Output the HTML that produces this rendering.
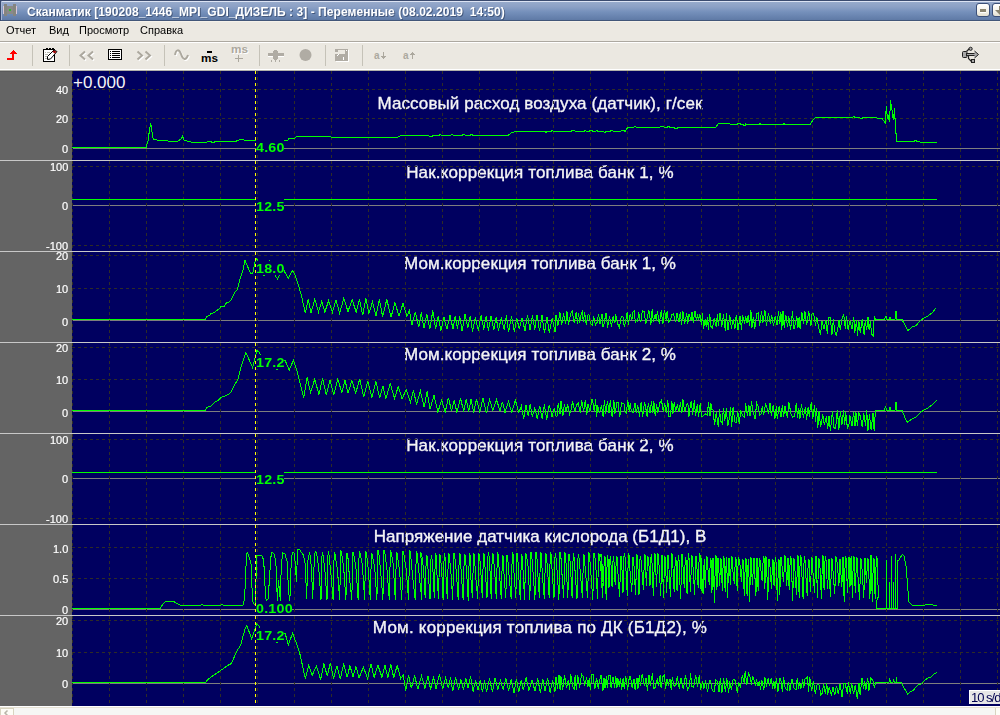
<!DOCTYPE html>
<html><head><meta charset="utf-8">
<style>
*{margin:0;padding:0;box-sizing:border-box}
html,body{width:1000px;height:715px;overflow:hidden;background:#ece9e2;font-family:"Liberation Sans",sans-serif}
.a{position:absolute;white-space:pre;line-height:1}
#title{position:absolute;left:0;top:0;width:1000px;height:21px;background:linear-gradient(#3a4a6e 0,#3a4a6e 1px,#dce3f3 1px,#dce3f3 2px,#97aacb 2px,#8ba0c5 7px,#7590bb 12px,#5f7aa6 20px,#425679 20px,#425679 21px)}
#title .t{will-change:transform;letter-spacing:0.06px;left:27px;top:6px;font-weight:bold;font-size:12px;color:#fff;text-shadow:1px 1px 0 #44587c}
#menu{position:absolute;left:0;top:21px;width:1000px;height:20px;background:#ece9e2;border-top:1px solid #f6f2ea}
#menu .m{top:3px;will-change:transform;font-size:11px;color:#000}
#sep1{position:absolute;left:0;top:41px;width:1000px;height:1px;background:#aca8a0}
#sep2{position:absolute;left:0;top:42px;width:1000px;height:1px;background:#fff}
#tb{position:absolute;left:0;top:43px;width:1000px;height:26px;background:#ebe8e1}
.vs{position:absolute;top:45px;width:1px;height:21px;background:#c5c2b8}
#w69{position:absolute;left:0;top:69px;width:1000px;height:1px;background:#fff}
#l70{position:absolute;left:0;top:70px;width:1000px;height:1px;background:#b0b0aa}
#leftp{position:absolute;left:0;top:71px;width:72px;height:635px;background:#646464;border-top:1px solid #5a5a5a}
.yl{position:absolute;right:932px;will-change:transform;-webkit-text-stroke:0.2px #fff;font-size:11px;color:#fff;line-height:1;white-space:pre}
.pt{will-change:transform;-webkit-text-stroke:0.35px #f4f4f4;position:absolute;left:340px;width:400px;text-align:center;font-size:17px;color:#f4f4f4;line-height:1;white-space:pre}
.vl{position:absolute;left:256px;background:#000060;color:#00ff00;font-weight:bold;font-size:13px;letter-spacing:0.2px;line-height:14px;padding:1px 0 0 0;will-change:transform;white-space:pre}
#bot{position:absolute;left:0;top:706px;width:1000px;height:9px;background:#f6f6f4;border-top:1px solid #fff}
svg{position:absolute;left:0;top:0}
</style></head><body>
<div id="title">
 <div style="position:absolute;left:0;top:0;width:1px;height:21px;background:#3a4a6e"></div><div style="position:absolute;left:1px;top:1px;width:1px;height:19px;background:#a4b4d4"></div>
 <svg width="20" height="20" style="left:0;top:0" shape-rendering="crispEdges"><rect x="3" y="6" width="1" height="8" fill="#d8c8d8"/><rect x="16" y="6" width="1" height="8" fill="#d8c8d8"/><rect x="4" y="4" width="3" height="12" fill="#858580"/><rect x="13" y="4" width="3" height="12" fill="#858580"/><rect x="7" y="6" width="6" height="8" fill="#8a8a88"/><rect x="9" y="9" width="2" height="2" fill="#33bb33"/></svg>
 <div class="a t">Сканматик [190208_1446_MPI_GDI_ДИЗЕЛЬ : 3] - Переменные (08.02.2019  14:50)</div>
 <div style="position:absolute;left:976px;top:3px;width:14px;height:14px;border-radius:3px;background:linear-gradient(#ffffff,#f4f2ea 60%,#e4e0d0);border:1px solid #3b4f78"><div style="position:absolute;left:3px;top:5px;width:6px;height:3px;background:#8a8470;border-bottom:1px solid #fff;box-sizing:content-box"></div></div>
 <div style="position:absolute;left:992px;top:3px;width:14px;height:14px;border-radius:3px;background:linear-gradient(#ffffff,#f4f2ea 60%,#e4e0d0);border:1px solid #3b4f78"><div style="position:absolute;left:6px;top:2px;width:2px;height:7px;background:#8a8470"></div><div style="position:absolute;left:2px;top:6px;width:0;height:0;border-top:5px solid #8a8470;border-left:5px solid transparent"></div></div>
</div>
<div id="menu">
 <div class="a m" style="left:6px">Отчет</div>
 <div class="a m" style="left:49px">Вид</div>
 <div class="a m" style="left:79px">Просмотр</div>
 <div class="a m" style="left:140px">Справка</div>
</div>
<div id="sep1"></div><div id="sep2"></div>
<div id="tb">
<svg width="1000" height="26" style="position:absolute;left:0;top:0" viewBox="0 43 1000 26">
<g shape-rendering="crispEdges">
<!-- red arrow -->
<path d="M13 50 L17 54 L14 54 L14 60 L7 60 L7 58 L12 58 L12 54 L9 54 Z" fill="#ff0000"/>
<!-- notepad -->
<rect x="43" y="49" width="12" height="13" fill="#000"/>
<rect x="44" y="50" width="10" height="11" fill="#fff"/>
<rect x="46" y="48" width="2" height="2" fill="#000"/><rect x="49" y="48" width="2" height="2" fill="#000"/><rect x="52" y="48" width="2" height="2" fill="#000"/>
<rect x="45" y="52" width="1" height="1" fill="#b8b8b0"/><rect x="47" y="52" width="3" height="1" fill="#b8b8b0"/>
<rect x="45" y="54" width="3" height="1" fill="#b8b8b0"/><rect x="45" y="56" width="2" height="1" fill="#b8b8b0"/><rect x="45" y="58" width="2" height="1" fill="#b8b8b0"/>
</g>
<path d="M47.5 59.5 L47.5 56.5 L54 50 L57 51.5 L50.5 59 Z" fill="#fff" stroke="#000" stroke-width="1"/>
<path d="M53.5 50.5 L56.5 51.5 L55 53.5 L52.5 52 Z" fill="#a00000"/>
<!-- << -->
<path d="M85 51.5 L80.5 55.5 L85 59.5 M93 51.5 L88.5 55.5 L93 59.5" fill="none" stroke="#fff" stroke-width="2" transform="translate(1,1)"/>
<path d="M85 51.5 L80.5 55.5 L85 59.5 M93 51.5 L88.5 55.5 L93 59.5" fill="none" stroke="#aca89e" stroke-width="2"/>
<!-- list -->
<g shape-rendering="crispEdges">
<rect x="108" y="49" width="14" height="11" fill="#000"/>
<rect x="109" y="50" width="12" height="9" fill="#fff"/>
<rect x="110" y="51" width="1" height="1" fill="#000"/><rect x="112" y="51" width="8" height="1" fill="#000"/>
<rect x="110" y="53" width="1" height="1" fill="#000"/><rect x="112" y="53" width="8" height="1" fill="#000"/>
<rect x="110" y="55" width="1" height="1" fill="#000"/><rect x="112" y="55" width="8" height="1" fill="#000"/>
<rect x="110" y="57" width="1" height="1" fill="#000"/><rect x="112" y="57" width="8" height="1" fill="#000"/>
</g>
<!-- >> -->
<path d="M137.5 51.5 L142 55.5 L137.5 59.5 M145.5 51.5 L150 55.5 L145.5 59.5" fill="none" stroke="#fff" stroke-width="2" transform="translate(1,1)"/>
<path d="M137.5 51.5 L142 55.5 L137.5 59.5 M145.5 51.5 L150 55.5 L145.5 59.5" fill="none" stroke="#aca89e" stroke-width="2"/>
<!-- sine -->
<path d="M175 55 C176 49, 179 49, 181 54 C183 60, 186 61, 188 55" fill="none" stroke="#fff" stroke-width="2" transform="translate(1,1)"/>
<path d="M175 55 C176 49, 179 49, 181 54 C183 60, 186 61, 188 55" fill="none" stroke="#aca89e" stroke-width="2"/>
<!-- ms bold -->
<rect x="207" y="51" width="5" height="2" fill="#000" shape-rendering="crispEdges"/>
<text x="201" y="62" font-family="Liberation Sans" font-weight="bold" font-size="11" fill="#000" textLength="17" lengthAdjust="spacingAndGlyphs">ms</text>
<!-- ms + gray -->
<text x="232" y="53.5" font-family="Liberation Sans" font-weight="bold" font-size="11" fill="#fff" textLength="17" lengthAdjust="spacingAndGlyphs">ms</text>
<text x="231" y="52.5" font-family="Liberation Sans" font-weight="bold" font-size="11" fill="#aca89e" textLength="17" lengthAdjust="spacingAndGlyphs">ms</text>
<g shape-rendering="crispEdges">
<rect x="235" y="58" width="8" height="1" fill="#aca89e"/><rect x="238" y="55" width="1" height="7" fill="#aca89e"/>
<!-- plug -->
<rect x="268" y="53" width="16" height="3" fill="#b0aca4"/>
<rect x="274" y="50" width="3" height="10" fill="#b0aca4"/><rect x="273" y="51" width="5" height="8" fill="#b0aca4"/>
<rect x="271" y="60" width="1" height="2" fill="#b0aca4"/><rect x="275" y="60" width="1" height="2" fill="#b0aca4"/><rect x="279" y="60" width="1" height="2" fill="#b0aca4"/>
<rect x="268" y="56" width="5" height="1" fill="#fff"/><rect x="278" y="56" width="6" height="1" fill="#fff"/>
</g>
<circle cx="305.5" cy="55" r="6" fill="#b0aca4"/>
<!-- save -->
<g shape-rendering="crispEdges">
<rect x="336" y="50" width="13" height="12" fill="#fff"/>
<rect x="335" y="49" width="13" height="12" fill="#b0aca4"/>
<rect x="338" y="50" width="7" height="4" fill="#ece9e2"/>
<rect x="335" y="52" width="4" height="2" fill="#ece9e2"/>
<rect x="346" y="50" width="1" height="1" fill="#fff"/>
<rect x="343" y="57" width="1" height="3" fill="#fff"/>
<rect x="337" y="55" width="1" height="1" fill="#fff"/><rect x="338" y="54" width="1" height="1" fill="#fff"/>
</g>
<!-- a down / a up -->
<text x="374" y="58.5" font-family="Liberation Sans" font-weight="bold" font-size="10" fill="#aca89e">a</text>
<g shape-rendering="crispEdges">
<rect x="383" y="52" width="1" height="7" fill="#aca89e"/><rect x="381" y="56" width="5" height="1" fill="#aca89e"/><rect x="382" y="57" width="3" height="1" fill="#aca89e"/>
</g>
<text x="403" y="58.5" font-family="Liberation Sans" font-weight="bold" font-size="10" fill="#aca89e">a</text>
<g shape-rendering="crispEdges">
<rect x="412" y="52" width="1" height="7" fill="#aca89e"/><rect x="410" y="54" width="5" height="1" fill="#aca89e"/><rect x="411" y="53" width="3" height="1" fill="#aca89e"/>
</g>
<!-- usb -->
<path d="M966.5 51.5 L969.5 48.5" stroke="#222" stroke-width="1.2" fill="none"/>
<circle cx="970.6" cy="48.8" r="1.6" fill="#a8a8a8" stroke="#222" stroke-width="1"/>
<path d="M968.5 55.5 L968.5 58.5 L971.5 61.5" stroke="#222" stroke-width="1.2" fill="none"/>
<rect x="971.5" y="59.5" width="3" height="3" fill="#a8a8a8" stroke="#222" stroke-width="1"/>
<rect x="962.5" y="51.5" width="4.5" height="6" rx="1" fill="#a8a8a8" stroke="#222" stroke-width="1"/>
<rect x="966.5" y="53.5" width="9" height="2" fill="#a8a8a8" stroke="#222" stroke-width="1"/>
<path d="M974.5 51 L978.5 54.5 L974.5 58" fill="#a8a8a8" stroke="#222" stroke-width="1"/>
</svg>

</div>
<div class="vs" style="left:32px"></div><div class="vs" style="left:69px"></div><div class="vs" style="left:164px"></div><div class="vs" style="left:259px"></div><div class="vs" style="left:325px"></div><div class="vs" style="left:362px"></div>
<div id="w69"></div><div id="l70"></div>
<div id="leftp"></div>
<div style="position:absolute;left:72px;top:71px;width:928px;height:635px;background:#000060"></div>
<div class="pt" style="top:95px;letter-spacing:0.09px">Массовый расход воздуха (датчик), г/сек</div>
<div class="pt" style="top:164px;letter-spacing:0.15px">Нак.коррекция топлива банк 1, %</div>
<div class="pt" style="top:255px;letter-spacing:0.09px">Мом.коррекция топлива банк 1, %</div>
<div class="pt" style="top:346px;letter-spacing:0.09px">Мом.коррекция топлива банк 2, %</div>
<div class="pt" style="top:437px;letter-spacing:0.15px">Нак.коррекция топлива банк 2, %</div>
<div class="pt" style="top:528px;letter-spacing:0.02px">Напряжение датчика кислорода (Б1Д1), В</div>
<div class="pt" style="top:619px;letter-spacing:0.2px">Мом. коррекция топлива по ДК (Б1Д2), %</div>
<div class="a" style="left:73px;top:74px;font-size:17px;color:#f4f4f4">+0.000</div>
<svg width="1000" height="715" shape-rendering="crispEdges">
<path d="M73 148.5H1000 M73 205.5H1000 M73 320.5H1000 M73 411.5H1000 M73 478.5H1000 M73 609.5H1000 M73 683.5H1000" stroke="#7e7e7e" stroke-width="1" fill="none"/>
<path d="M72.5 71V160 M109.5 71V160 M146.5 71V160 M183.5 71V160 M220.5 71V160 M257.5 71V160 M294.5 71V160 M331.5 71V160 M368.5 71V160 M405.5 71V160 M442.5 71V160 M479.5 71V160 M516.5 71V160 M553.5 71V160 M590.5 71V160 M627.5 71V160 M664.5 71V160 M701.5 71V160 M738.5 71V160 M775.5 71V160 M812.5 71V160 M849.5 71V160 M886.5 71V160 M923.5 71V160 M960.5 71V160 M997.5 71V160 M72 89.5H1000 M72 118.5H1000 M72.5 161V251 M109.5 161V251 M146.5 161V251 M183.5 161V251 M220.5 161V251 M257.5 161V251 M294.5 161V251 M331.5 161V251 M368.5 161V251 M405.5 161V251 M442.5 161V251 M479.5 161V251 M516.5 161V251 M553.5 161V251 M590.5 161V251 M627.5 161V251 M664.5 161V251 M701.5 161V251 M738.5 161V251 M775.5 161V251 M812.5 161V251 M849.5 161V251 M886.5 161V251 M923.5 161V251 M960.5 161V251 M997.5 161V251 M72 166.5H1000 M72 245.5H1000 M72.5 252V342 M109.5 252V342 M146.5 252V342 M183.5 252V342 M220.5 252V342 M257.5 252V342 M294.5 252V342 M331.5 252V342 M368.5 252V342 M405.5 252V342 M442.5 252V342 M479.5 252V342 M516.5 252V342 M553.5 252V342 M590.5 252V342 M627.5 252V342 M664.5 252V342 M701.5 252V342 M738.5 252V342 M775.5 252V342 M812.5 252V342 M849.5 252V342 M886.5 252V342 M923.5 252V342 M960.5 252V342 M997.5 252V342 M72 255.5H1000 M72 288.5H1000 M72.5 343V433 M109.5 343V433 M146.5 343V433 M183.5 343V433 M220.5 343V433 M257.5 343V433 M294.5 343V433 M331.5 343V433 M368.5 343V433 M405.5 343V433 M442.5 343V433 M479.5 343V433 M516.5 343V433 M553.5 343V433 M590.5 343V433 M627.5 343V433 M664.5 343V433 M701.5 343V433 M738.5 343V433 M775.5 343V433 M812.5 343V433 M849.5 343V433 M886.5 343V433 M923.5 343V433 M960.5 343V433 M997.5 343V433 M72 347.5H1000 M72 379.5H1000 M72.5 434V524 M109.5 434V524 M146.5 434V524 M183.5 434V524 M220.5 434V524 M257.5 434V524 M294.5 434V524 M331.5 434V524 M368.5 434V524 M405.5 434V524 M442.5 434V524 M479.5 434V524 M516.5 434V524 M553.5 434V524 M590.5 434V524 M627.5 434V524 M664.5 434V524 M701.5 434V524 M738.5 434V524 M775.5 434V524 M812.5 434V524 M849.5 434V524 M886.5 434V524 M923.5 434V524 M960.5 434V524 M997.5 434V524 M72 439.5H1000 M72 518.5H1000 M72.5 525V615 M109.5 525V615 M146.5 525V615 M183.5 525V615 M220.5 525V615 M257.5 525V615 M294.5 525V615 M331.5 525V615 M368.5 525V615 M405.5 525V615 M442.5 525V615 M479.5 525V615 M516.5 525V615 M553.5 525V615 M590.5 525V615 M627.5 525V615 M664.5 525V615 M701.5 525V615 M738.5 525V615 M775.5 525V615 M812.5 525V615 M849.5 525V615 M886.5 525V615 M923.5 525V615 M960.5 525V615 M997.5 525V615 M72 547.5H1000 M72 578.5H1000 M72.5 616V706 M109.5 616V706 M146.5 616V706 M183.5 616V706 M220.5 616V706 M257.5 616V706 M294.5 616V706 M331.5 616V706 M368.5 616V706 M405.5 616V706 M442.5 616V706 M479.5 616V706 M516.5 616V706 M553.5 616V706 M590.5 616V706 M627.5 616V706 M664.5 616V706 M701.5 616V706 M738.5 616V706 M775.5 616V706 M812.5 616V706 M849.5 616V706 M886.5 616V706 M923.5 616V706 M960.5 616V706 M997.5 616V706 M72 620.5H1000 M72 652.5H1000" stroke="#2e2c26" stroke-width="1" stroke-dasharray="3 3" fill="none"/>
<path d="M72.0 147.5 L146.0 147.5 L148.0 141.0 L149.5 130.0 L150.7 123.5 L151.5 128.0 L152.5 136.0 L153.5 139.5 L160.0 140.5 L168.0 141.0 L178.0 141.0 L181.0 139.0 L182.4 136.0 L184.0 140.0 L188.0 141.5 L194.0 142.4 L205.0 142.4 L210.0 141.5 L213.0 142.5 L216.0 141.5 L235.0 141.5 L238.0 140.5 L241.0 139.0 L244.0 140.0 L256.0 140.0" stroke="#00ff00" stroke-width="1" fill="none" stroke-linejoin="miter"/>
<path d="M284.0 140.0 L288.0 140.0 L289.0 138.0 L295.0 138.0 L297.0 136.0 L330.0 136.0 L331.0 137.0 L398.0 137.0 L400.0 136.0 L402.0 135.5 L428.7 135.5 L429.2 136.5 L432.2 136.5 L432.7 135.5 L439.2 135.5 L439.7 134.5 L440.7 134.5 L441.2 135.5 L450.0 135.5 L452.0 134.5 L454.0 135.5 L462.1 135.5 L462.6 134.5 L464.6 134.5 L465.1 135.5 L470.0 135.5 L471.0 134.5 L474.0 135.5 L508.0 135.5 L511.0 133.0 L515.0 131.5 L545.0 131.5 L545.5 132.5 L546.5 132.5 L547.0 131.5 L551.1 131.5 L551.6 130.5 L552.6 130.5 L553.1 131.5 L571.4 131.5 L571.9 130.5 L574.9 130.5 L575.4 131.5 L584.2 131.5 L584.7 130.5 L585.7 130.5 L586.2 131.5 L589.5 131.5 L590.0 130.5 L592.0 130.5 L592.5 131.5 L595.6 131.5 L596.1 130.5 L597.1 130.5 L597.6 131.5 L603.6 131.5 L604.1 132.5 L605.1 132.5 L605.6 131.5 L610.2 131.5 L610.7 130.5 L612.7 130.5 L613.2 131.5 L620.6 131.5 L621.1 130.5 L624.1 130.5 L624.6 131.5 L625.0 131.5 L628.0 127.0 L634.1 127.0 L634.6 126.0 L635.6 126.0 L636.1 127.0 L660.0 127.0 L662.0 126.0 L664.0 127.0 L667.8 127.0 L668.3 126.0 L669.3 126.0 L669.8 127.0 L674.1 127.0 L674.6 128.0 L677.6 128.0 L678.1 127.0 L680.0 127.0 L682.0 128.0 L690.0 127.0 L700.0 127.5 L716.0 127.0 L718.0 124.0 L728.0 123.0 L730.0 124.0 L737.4 124.0 L737.9 123.0 L739.9 123.0 L740.4 124.0 L742.8 124.0 L743.3 125.0 L745.3 125.0 L745.8 124.0 L759.0 124.5 L760.0 123.5 L761.0 124.5 L783.0 124.5 L784.0 123.5 L785.0 124.5 L810.0 124.5 L813.0 120.0 L816.0 117.0 L822.0 118.0 L830.0 117.5 L840.0 118.0 L850.0 117.5 L852.8 117.5 L853.3 116.5 L854.3 116.5 L854.8 117.5 L860.0 118.0 L862.6 118.0 L863.1 117.0 L866.1 117.0 L866.6 118.0 L870.0 117.7 L876.0 117.4 L878.0 119.0 L882.0 118.4 L883.0 119.8 L885.4 123.0 L885.5 115.3 L886.6 106.2 L887.1 115.3 L888.5 120.2 L889.4 111.4 L889.6 122.3 L890.4 100.2 L891.0 111.0 L891.3 104.0 L892.4 113.2 L893.4 120.2 L894.5 108.3 L894.8 118.8 L895.5 118.8 L895.9 133.1 L896.4 133.1 L896.6 141.2 L914.4 141.2 L914.9 140.2 L915.9 140.2 L916.4 141.2 L919.7 141.2 L920.0 142.4 L937.0 142.4" stroke="#00ff00" stroke-width="1" fill="none" stroke-linejoin="miter"/>
<path d="M72.0 199.5 L256.0 199.5" stroke="#00ff00" stroke-width="1" fill="none" stroke-linejoin="miter"/>
<path d="M284.0 199.5 L937.0 199.5" stroke="#00ff00" stroke-width="1" fill="none" stroke-linejoin="miter"/>
<path d="M72.0 472.5 L256.0 472.5" stroke="#00ff00" stroke-width="1" fill="none" stroke-linejoin="miter"/>
<path d="M284.0 472.5 L937.0 472.5" stroke="#00ff00" stroke-width="1" fill="none" stroke-linejoin="miter"/>
<path d="M72.0 319.7 L205.0 319.7 L206.8 316.6 L210.2 314.9 L211.0 313.2 L214.4 312.9 L216.1 310.7 L218.7 309.5 L221.2 306.4 L224.6 306.0 L226.3 303.0 L229.7 301.6 L231.4 299.6 L234.8 292.5 L237.4 289.4 L239.9 279.2 L243.3 269.0 L245.0 260.5 L250.4 273.0 L252.8 273.0 L254.9 262.5 L256.4 258.6 L259.0 262.0 L262.0 272.0 L264.0 276.0 L266.0 268.0 L269.3 260.4 L272.0 266.0 L275.0 275.0 L277.4 279.0 L281.0 272.0 L284.0 270.6 L288.2 278.4 L292.4 270.6 L294.2 273.0 L297.7 282.6 L301.1 294.5 L305.4 313.2 L308.2 298.9 L311.0 313.1 L314.8 298.9 L318.5 311.9 L321.7 301.3 L324.8 312.1 L328.6 300.8 L332.5 312.0 L336.0 299.8 L339.6 313.2 L343.8 298.3 L348.0 311.6 L352.1 299.4 L356.2 312.3 L359.5 299.1 L362.7 315.3 L365.8 298.4 L368.9 313.8 L372.5 301.6 L376.0 315.7 L379.3 299.2 L382.6 316.5 L386.8 299.3 L391.0 317.2 L395.0 302.6 L399.0 316.2 L403.0 303.4 L406.9 316.3 L409.4 310.7 L411.9 324.9 L415.3 312.0 L418.8 327.3 L421.3 312.2 L423.9 328.3 L426.9 314.2 L429.9 329.0 L432.8 310.5 L435.6 328.5 L438.2 315.9 L440.9 331.0 L443.9 317.1 L446.9 329.2 L450.0 315.4 L453.0 329.1 L455.2 315.8 L457.4 328.6 L459.7 316.2 L462.1 331.1 L465.0 314.1 L467.8 328.4 L470.2 316.0 L472.5 331.5 L475.4 317.6 L478.3 330.6 L481.1 315.1 L483.8 329.6 L486.1 316.1 L488.4 330.9 L491.1 315.6 L493.8 330.2 L496.1 317.3 L498.5 330.9 L501.3 317.3 L504.2 329.8 L506.4 315.3 L508.6 332.4 L511.5 315.8 L514.4 332.0 L516.8 317.7 L519.2 329.3 L522.1 318.2 L525.0 330.7 L527.5 314.8 L530.1 330.2 L532.4 315.5 L534.7 329.5 L537.1 314.8 L539.5 331.4 L542.0 315.3 L544.5 333.1 L546.9 316.6 L549.3 333.0 L552.2 318.4 L555.0 331.9 L556.0 314.8 L557.9 325.9 L559.9 312.1 L561.6 325.0 L563.6 313.6 L565.7 323.8 L566.9 311.3 L568.6 324.6 L570.5 314.3 L572.2 311.3 L574.3 323.3 L576.3 311.7 L577.5 323.7 L578.4 312.8 L579.8 322.7 L580.8 315.4 L582.3 311.9 L583.4 322.4 L584.6 312.1 L586.3 324.9 L587.6 315.7 L588.9 313.9 L590.2 322.7 L592.2 325.3 L593.6 316.3 L595.4 325.0 L597.0 322.6 L598.6 313.8 L600.0 323.6 L602.0 313.9 L602.9 326.8 L604.2 323.2 L606.0 312.7 L607.6 327.8 L609.5 315.8 L611.5 326.5 L613.1 316.1 L614.8 323.4 L615.8 314.5 L617.4 323.2 L619.4 327.6 L621.2 316.9 L622.9 316.6 L624.3 326.9 L625.4 322.2 L627.2 312.1 L628.3 324.9 L630.1 314.4 L631.9 319.5 L632.8 312.5 L634.1 310.9 L635.4 321.9 L636.5 320.5 L637.6 321.7 L638.6 312.1 L640.1 320.7 L641.0 321.3 L642.3 310.7 L644.2 311.5 L645.6 323.5 L646.8 320.3 L648.8 309.7 L650.9 324.8 L652.2 309.2 L653.4 322.3 L655.2 313.9 L656.2 320.5 L657.4 311.4 L659.3 323.5 L661.2 310.3 L662.9 323.9 L664.4 309.6 L666.2 320.6 L667.1 311.1 L668.6 321.8 L670.4 320.2 L671.9 314.1 L673.5 313.9 L675.6 322.4 L677.0 313.4 L679.1 322.2 L680.3 312.0 L681.6 324.5 L682.8 310.7 L684.7 324.0 L686.7 313.5 L687.8 324.0 L689.0 313.9 L691.1 320.1 L692.0 312.1 L693.2 323.0 L694.9 310.8 L696.6 321.0 L697.6 314.0 L698.5 319.7 L699.9 314.1 L701.4 325.1 L702.6 312.9 L703.5 329.3 L705.2 318.9 L706.2 326.7 L707.3 317.1 L708.4 329.8 L709.7 314.4 L711.0 326.5 L712.6 328.0 L714.2 318.1 L716.2 327.2 L717.3 314.4 L718.4 325.8 L720.1 312.6 L721.7 326.7 L723.5 314.5 L725.3 330.6 L726.4 313.0 L728.0 330.4 L729.8 315.1 L731.5 328.5 L733.2 318.6 L734.9 329.3 L736.2 314.9 L738.1 330.3 L740.1 315.6 L741.4 329.6 L742.7 315.3 L744.7 324.0 L745.7 315.8 L746.9 323.3 L748.1 315.3 L749.6 325.5 L750.9 310.0 L752.0 327.6 L753.2 316.9 L754.9 328.5 L756.6 313.9 L758.3 313.0 L759.6 325.6 L761.6 310.8 L762.9 323.2 L764.9 310.2 L766.4 326.4 L768.5 312.8 L770.3 323.6 L771.7 315.4 L773.4 325.7 L775.2 316.5 L777.1 325.4 L778.5 310.8 L779.8 324.4 L780.9 312.2 L781.8 329.6 L783.0 310.6 L784.2 327.5 L785.8 314.6 L787.6 327.1 L788.7 316.0 L790.6 329.7 L792.5 311.3 L793.9 329.2 L794.8 326.1 L796.8 315.9 L797.8 328.4 L799.2 316.7 L800.1 329.2 L801.9 311.9 L803.4 323.9 L804.9 311.1 L806.7 324.8 L808.8 310.9 L810.9 326.4 L811.8 314.1 L813.6 313.4 L815.5 325.5 L816.8 317.0 L818.8 328.3 L820.5 335.0 L822.0 321.0 L824.0 328.8 L825.9 320.0 L827.3 334.0 L828.6 317.1 L830.4 317.6 L831.9 335.2 L833.3 319.4 L834.7 331.1 L836.3 335.2 L837.7 329.0 L839.0 320.4 L840.3 330.4 L841.6 320.6 L843.7 314.5 L845.4 329.1 L846.4 316.4 L848.1 329.6 L850.0 320.7 L852.0 329.3 L853.8 316.9 L854.8 333.1 L856.6 319.7 L857.5 335.7 L858.9 321.2 L860.3 332.9 L862.1 319.4 L864.2 335.3 L865.2 320.4 L866.6 330.4 L868.0 317.2 L869.1 330.0 L870.4 321.0 L871.6 334.3 L873.2 335.8 L874.3 315.8 L875.4 319.5 L884.0 319.5 L886.0 316.0 L887.0 319.5 L889.0 319.5 L890.0 317.0 L891.0 319.5 L895.0 319.5 L896.0 311.0 L897.0 319.5 L902.0 319.5 L908.0 330.5 L912.0 327.0 L916.0 325.5 L920.0 321.0 L924.0 318.0 L928.0 316.0 L932.0 313.0 L936.0 308.0" stroke="#00ff00" stroke-width="1" fill="none" stroke-linejoin="miter"/>
<path d="M72.0 410.7 L205.0 410.7 L206.8 407.6 L211.0 405.9 L214.4 402.5 L218.7 400.0 L221.2 397.4 L225.5 395.7 L228.9 394.0 L231.4 391.5 L234.8 384.7 L238.2 378.7 L241.6 365.1 L245.9 352.4 L252.7 367.7 L256.9 350.7 L259.0 352.0 L262.0 358.0 L264.0 366.0 L266.0 362.0 L269.0 356.0 L272.0 360.0 L275.0 368.0 L277.0 370.0 L281.0 363.0 L285.0 360.0 L289.2 370.2 L293.5 360.0 L297.7 373.6 L303.7 397.4 L307.1 377.5 L310.6 392.3 L314.8 379.1 L318.9 394.6 L322.6 378.5 L326.3 394.9 L330.0 380.2 L333.7 394.8 L337.8 379.0 L341.9 392.9 L345.0 380.3 L348.1 393.1 L351.9 380.3 L355.7 393.3 L359.7 379.0 L363.8 397.3 L367.8 380.9 L371.9 397.6 L375.9 381.6 L379.8 398.2 L382.9 385.8 L385.9 398.8 L390.2 383.3 L394.5 398.2 L398.3 386.7 L402.1 398.9 L406.2 389.3 L410.4 402.2 L413.5 390.3 L416.5 404.6 L420.4 391.2 L424.2 407.2 L427.1 391.4 L430.0 409.3 L434.0 395.2 L437.9 412.1 L441.6 400.0 L445.2 412.1 L448.4 397.7 L451.5 410.8 L454.2 400.6 L456.9 412.4 L460.4 398.1 L463.8 411.5 L466.3 398.7 L468.7 411.9 L471.1 398.7 L473.6 412.5 L476.6 398.9 L479.7 412.4 L483.0 398.1 L486.4 413.3 L489.6 399.5 L492.9 410.8 L496.4 399.6 L500.0 410.7 L502.5 401.7 L505.0 412.8 L508.4 401.3 L511.8 412.6 L515.3 400.0 L518.9 412.7 L521.3 405.8 L523.7 419.2 L525.9 404.7 L528.1 415.9 L530.2 403.9 L532.3 416.6 L534.8 408.0 L537.3 418.8 L539.7 405.7 L542.1 418.9 L544.4 404.5 L546.7 419.7 L549.3 404.8 L552.0 416.7 L554.1 408.3 L556.2 416.9 L557.2 415.5 L558.2 403.3 L560.1 414.3 L561.0 401.4 L562.9 415.9 L564.3 404.5 L566.2 411.6 L567.7 404.0 L569.4 414.7 L570.7 411.4 L572.7 400.9 L574.7 411.7 L576.6 405.0 L578.3 403.0 L580.2 413.2 L581.7 400.1 L583.6 411.3 L585.3 400.2 L586.9 414.6 L587.9 404.0 L590.0 411.3 L592.0 399.5 L593.1 403.3 L594.2 411.7 L595.7 399.2 L596.6 417.3 L597.7 405.4 L599.6 413.2 L601.4 405.1 L603.1 416.6 L604.5 399.6 L605.7 413.6 L607.4 400.7 L609.0 413.1 L610.3 400.2 L612.2 417.3 L613.9 400.4 L615.0 413.5 L617.1 402.0 L618.1 402.5 L619.7 416.9 L621.6 402.7 L622.9 403.9 L623.9 403.5 L625.0 412.3 L626.4 413.5 L627.7 399.9 L629.3 412.3 L630.2 403.5 L631.5 411.5 L633.2 412.5 L635.0 403.1 L636.2 413.0 L637.7 404.9 L639.5 416.5 L641.1 402.4 L642.7 417.1 L644.4 402.9 L645.3 404.7 L647.1 416.8 L648.3 403.0 L650.0 412.7 L651.5 400.9 L652.8 412.8 L653.9 401.3 L655.2 415.5 L656.7 404.2 L657.8 413.4 L659.9 402.8 L661.5 400.2 L663.4 412.4 L664.6 402.8 L666.3 412.7 L667.8 400.2 L669.0 416.5 L670.5 416.4 L671.8 400.7 L672.9 413.6 L674.2 402.0 L675.7 411.7 L677.4 404.3 L678.7 412.4 L680.4 402.5 L681.9 413.3 L682.9 399.3 L684.8 412.2 L686.5 404.5 L687.9 403.1 L688.9 417.0 L690.5 404.0 L691.5 401.0 L692.5 415.4 L694.3 400.5 L695.6 416.1 L697.2 404.2 L698.6 416.5 L700.3 402.8 L701.5 416.4 L702.9 416.3 L704.0 414.8 L705.8 413.9 L707.3 415.1 L708.5 402.3 L710.0 416.1 L710.9 403.0 L711.9 409.7 L712.9 409.3 L714.6 424.9 L716.2 412.1 L718.3 426.6 L719.6 409.2 L720.5 420.6 L722.2 423.2 L723.4 408.2 L724.7 420.9 L726.4 408.0 L727.6 425.9 L728.8 422.5 L730.4 406.8 L731.7 426.7 L733.1 407.3 L734.8 421.9 L736.5 422.3 L737.7 410.7 L739.3 424.1 L740.7 410.0 L742.6 415.2 L744.6 417.6 L745.7 403.3 L747.4 416.0 L748.9 404.7 L750.1 416.3 L751.4 401.2 L753.4 413.2 L755.2 419.1 L756.6 402.8 L758.3 406.3 L759.5 415.7 L761.0 414.0 L762.4 405.7 L763.5 415.3 L765.6 404.1 L766.9 407.2 L768.5 414.0 L770.0 403.1 L771.3 416.0 L773.1 405.1 L774.9 419.3 L776.3 405.9 L777.2 418.8 L779.2 406.1 L781.1 417.3 L782.4 404.9 L783.6 417.0 L785.0 405.6 L786.2 413.8 L787.5 416.4 L788.8 401.8 L790.9 413.4 L792.5 417.0 L794.5 416.4 L796.4 402.6 L797.4 418.3 L798.8 408.0 L800.0 418.6 L801.4 403.9 L803.4 417.5 L805.3 407.3 L806.6 419.5 L808.1 407.0 L809.4 417.2 L810.4 405.8 L811.3 403.8 L812.8 418.7 L814.6 405.2 L815.6 421.6 L816.5 407.8 L817.8 427.9 L818.9 410.6 L820.7 427.4 L822.7 414.1 L824.4 425.3 L826.3 416.5 L827.7 429.0 L829.0 416.3 L830.4 431.1 L832.4 410.7 L834.0 427.6 L835.6 428.6 L837.3 409.7 L838.9 429.5 L840.4 411.4 L841.9 425.4 L843.5 410.4 L844.7 424.9 L845.7 412.1 L847.4 428.2 L848.9 424.8 L849.9 415.2 L852.0 426.0 L853.6 411.9 L855.0 425.8 L855.9 412.3 L857.5 425.7 L858.7 411.9 L860.2 416.0 L862.3 427.3 L863.7 412.9 L865.6 426.3 L866.7 410.2 L868.0 430.6 L869.4 414.3 L871.2 430.3 L873.0 412.7 L874.1 430.6 L875.4 410.6 L884.0 410.6 L885.5 407.0 L887.0 410.6 L889.0 410.6 L890.0 407.0 L891.0 410.6 L895.0 410.6 L896.0 402.0 L897.0 410.6 L902.0 410.6 L907.0 422.3 L912.0 419.0 L916.0 417.0 L920.0 413.0 L924.0 410.0 L928.0 408.0 L932.0 405.0 L936.6 400.2" stroke="#00ff00" stroke-width="1" fill="none" stroke-linejoin="miter"/>
<path d="M72.0 682.3 L205.9 682.3 L207.6 679.8 L214.4 674.7 L219.5 671.3 L228.0 665.3 L231.4 663.6 L236.5 651.7 L240.8 644.9 L245.0 628.8 L246.7 625.4 L251.8 639.0 L256.9 623.7 L259.0 626.0 L262.0 632.0 L264.0 640.0 L266.0 636.0 L269.0 630.0 L272.0 634.0 L275.0 641.0 L277.0 643.0 L281.0 636.0 L285.0 633.0 L288.4 644.9 L292.6 633.0 L299.4 651.7 L305.4 678.9 L308.7 665.0 L312.1 675.6 L316.4 665.9 L320.7 679.7 L323.9 663.5 L327.2 676.0 L330.4 662.9 L333.5 678.6 L336.9 666.1 L340.3 678.9 L343.7 663.6 L347.1 677.3 L350.0 665.6 L352.9 676.8 L356.0 666.6 L359.1 677.8 L363.4 667.0 L367.6 678.8 L370.9 663.8 L374.1 677.2 L378.0 665.3 L382.0 677.5 L384.9 664.7 L387.8 677.9 L390.8 664.4 L393.7 677.6 L397.2 665.4 L400.7 678.8 L403.2 675.0 L405.7 690.6 L408.5 674.9 L411.3 688.3 L414.6 675.6 L417.9 689.3 L421.5 675.8 L425.0 688.5 L427.9 675.7 L430.7 690.0 L433.4 676.6 L436.1 689.2 L439.4 673.8 L442.7 688.8 L445.6 677.7 L448.4 688.2 L450.6 676.9 L452.7 691.3 L455.6 677.2 L458.6 689.8 L461.0 679.6 L463.5 689.9 L465.8 678.0 L468.1 688.3 L470.6 676.6 L473.1 691.7 L475.6 679.9 L478.0 690.2 L480.3 680.2 L482.5 692.1 L484.5 680.2 L486.5 692.2 L489.5 678.6 L492.4 691.8 L495.1 677.8 L497.8 689.1 L500.5 680.4 L503.2 689.6 L505.9 678.6 L508.6 690.9 L511.3 679.2 L514.0 692.6 L516.4 678.7 L518.8 692.1 L521.1 680.6 L523.3 689.9 L526.1 677.5 L529.0 690.5 L532.0 679.8 L535.0 691.2 L537.7 678.5 L540.4 693.0 L542.7 678.8 L545.0 690.7 L547.6 678.1 L550.1 692.6 L552.6 680.4 L555.0 691.4 L556.0 677.0 L557.5 688.5 L559.0 675.2 L560.1 689.7 L561.0 676.5 L562.6 690.1 L564.6 675.1 L566.5 687.8 L568.4 679.6 L569.6 689.8 L570.8 674.2 L572.6 686.0 L574.2 689.7 L575.2 674.6 L576.3 689.6 L577.8 675.3 L579.7 687.5 L581.6 674.2 L583.3 676.3 L584.7 685.8 L586.7 677.1 L587.9 686.5 L589.3 678.3 L590.3 690.4 L591.9 674.3 L593.0 674.4 L594.8 689.2 L596.6 677.8 L598.2 688.5 L599.9 679.7 L601.1 675.1 L602.9 690.9 L604.0 678.2 L605.0 688.4 L606.3 676.5 L607.3 687.8 L608.4 675.8 L610.1 675.8 L611.1 687.9 L612.9 676.7 L614.6 688.1 L615.9 676.1 L616.8 688.4 L617.9 678.5 L619.4 686.9 L620.3 678.2 L621.7 690.1 L623.1 678.0 L624.2 688.9 L625.8 675.9 L627.6 689.6 L629.4 676.7 L630.6 676.5 L632.1 687.8 L634.0 678.9 L635.1 690.0 L637.0 678.2 L637.9 688.6 L639.3 674.7 L640.4 686.4 L642.2 674.1 L643.3 679.2 L644.5 686.4 L645.9 677.6 L647.4 690.5 L649.0 675.3 L650.3 685.6 L652.4 673.4 L653.8 688.2 L655.2 687.8 L657.3 678.4 L658.3 686.4 L660.1 675.1 L661.1 688.4 L662.7 676.8 L664.5 675.1 L665.5 689.1 L667.0 678.6 L668.4 684.5 L670.0 679.1 L671.3 690.4 L672.2 677.0 L674.3 686.9 L676.1 684.5 L677.3 676.2 L679.3 688.8 L680.9 677.6 L682.5 686.8 L683.5 688.0 L685.6 674.8 L687.4 690.0 L689.4 686.4 L690.6 673.2 L691.7 686.1 L693.7 687.3 L695.7 675.4 L697.5 687.1 L699.3 675.1 L700.6 689.8 L702.6 681.1 L703.9 688.7 L705.6 680.6 L707.5 692.0 L709.5 680.6 L710.5 680.3 L712.3 690.9 L714.4 691.6 L715.6 679.7 L717.4 681.3 L719.1 692.1 L720.3 678.1 L721.9 693.0 L723.6 678.4 L725.4 691.7 L726.8 678.1 L728.7 692.8 L729.7 681.2 L731.4 690.4 L732.9 680.0 L734.7 679.5 L735.7 682.6 L737.2 692.6 L738.8 682.4 L740.5 687.9 L742.2 675.2 L744.1 682.5 L745.2 670.8 L746.9 684.9 L748.4 672.8 L749.7 675.5 L751.5 684.6 L752.5 676.0 L754.5 681.4 L755.5 685.9 L756.4 679.3 L757.8 686.4 L759.4 680.6 L760.4 689.5 L761.9 680.3 L763.8 689.7 L765.0 677.5 L766.5 686.9 L768.2 677.7 L769.4 685.6 L771.4 677.8 L772.5 689.3 L773.9 680.8 L774.9 688.5 L776.6 677.9 L777.8 692.4 L779.7 678.5 L780.6 678.1 L782.4 691.6 L783.6 677.5 L785.2 688.3 L787.1 690.1 L788.4 682.0 L790.0 690.5 L791.9 678.6 L794.0 688.3 L796.1 689.6 L797.3 677.6 L798.5 688.8 L799.7 682.0 L800.8 689.3 L802.7 679.1 L803.7 687.9 L805.1 678.3 L806.0 678.7 L807.4 677.2 L808.6 691.5 L809.7 677.2 L811.6 691.4 L813.4 681.1 L815.3 693.5 L817.2 684.3 L819.2 685.3 L820.9 695.5 L822.2 693.3 L823.7 684.3 L825.3 694.2 L826.8 683.2 L827.7 694.5 L829.3 686.8 L831.4 696.0 L832.8 686.7 L834.8 694.8 L836.4 685.7 L838.4 694.4 L840.0 683.8 L842.1 697.0 L843.6 684.0 L845.3 683.9 L847.3 693.8 L848.3 682.3 L850.3 694.1 L851.7 682.8 L853.5 694.3 L855.3 685.0 L857.2 698.8 L859.0 683.3 L860.1 694.9 L862.0 678.2 L863.7 689.2 L864.6 680.9 L865.9 689.7 L867.7 677.6 L868.9 691.1 L870.9 677.5 L873.0 681.2 L874.6 688.0 L875.4 682.4 L889.0 682.4 L889.5 679.0 L891.0 682.4 L893.0 682.4 L893.5 679.0 L894.5 682.4 L896.0 682.4 L896.5 677.0 L897.0 682.4 L901.0 682.4 L907.5 694.0 L911.0 691.5 L913.0 690.5 L918.0 685.0 L921.0 684.0 L924.0 681.0 L928.0 678.0 L931.0 677.0 L934.0 674.0 L937.0 672.5" stroke="#00ff00" stroke-width="1" fill="none" stroke-linejoin="miter"/>
<path d="M72.0 608.5 L160.0 608.5 L163.0 604.0 L166.0 601.0 L173.0 601.0 L176.0 603.0 L181.0 605.5 L200.0 605.5 L202.0 604.5 L204.0 605.5 L220.0 605.5 L222.0 604.5 L224.0 605.5 L243.0 605.5 L244.6 598.0 L245.6 575.8 L246.6 553.1 L247.6 552.6 L250.1 560.2 L251.1 564.2 L252.1 590.4 L253.1 603.5 L255.2 604.5 L255.7 589.4 L256.7 555.1 L261.7 555.1 L263.7 560.2 L264.7 580.3 L265.7 598.4 L266.7 600.5 L268.2 598.4 L269.8 573.2 L271.3 552.6 L273.8 553.1 L275.3 558.6 L276.3 569.2 L277.3 600.5 L278.5 580.0 L280.3 600.5 L281.3 564.2 L282.9 553.1 L284.9 554.1 L287.4 562.2 L288.4 590.4 L289.9 600.5 L290.4 583.3 L291.4 558.1 L292.4 552.6 L294.4 553.1 L295.5 567.2 L296.5 582.3 L297.5 549.6 L299.5 549.6 L303.5 555.1 L305.5 565.2 L306.5 599.4 L308.0 560.2 L309.6 551.6 L311.6 569.2 L312.6 599.4 L314.6 554.1 L315.9 551.7 L316.6 553.2 L318.8 569.0 L321.0 599.5 L322.1 552.1 L322.8 553.6 L324.9 569.9 L327.0 599.5 L328.1 551.0 L328.8 552.5 L330.9 573.8 L333.1 599.5 L334.2 552.1 L334.9 553.6 L337.4 569.5 L339.7 599.5 L340.8 550.4 L341.5 551.9 L343.7 567.8 L345.9 599.5 L347.0 552.9 L347.7 554.4 L349.7 580.5 L351.8 599.5 L352.9 552.3 L353.6 553.8 L355.9 567.0 L358.1 599.5 L359.2 550.8 L359.9 552.3 L362.4 565.2 L364.6 599.5 L365.7 551.1 L366.4 552.6 L368.3 569.7 L370.3 599.5 L371.4 553.0 L372.1 554.5 L374.6 566.4 L376.9 599.5 L378.0 550.2 L378.7 551.7 L380.8 573.2 L382.9 599.5 L384.0 550.1 L384.7 551.6 L387.0 569.8 L389.3 599.5 L390.4 550.4 L391.1 551.9 L393.2 564.4 L395.3 599.5 L396.4 551.9 L397.1 553.4 L399.5 570.6 L401.8 599.5 L402.9 551.1 L403.6 552.6 L406.2 569.5 L408.5 599.5 L409.6 550.5 L410.3 552.0 L412.9 578.8 L415.2 599.5 L416.3 551.4 L417.0 552.9 L419.5 578.1 L421.9 599.5 L420.9 552.5 L421.6 554.0 L423.4 567.5 L425.2 597.6 L426.3 554.7 L427.0 556.2 L428.4 573.8 L430.0 599.4 L431.1 554.9 L431.8 556.4 L432.8 568.1 L434.3 597.5 L435.4 553.4 L436.1 554.9 L437.1 577.2 L438.5 598.9 L439.6 553.8 L440.3 555.3 L441.6 568.8 L443.1 600.0 L444.2 553.6 L444.9 555.1 L445.9 574.7 L447.3 598.8 L448.4 552.9 L449.1 554.4 L450.9 572.1 L452.7 599.5 L453.8 552.9 L454.5 554.4 L456.3 571.6 L458.2 599.6 L459.3 552.8 L460.0 554.3 L461.5 576.7 L463.2 600.0 L464.3 553.7 L465.0 555.2 L466.5 569.5 L468.2 600.5 L469.3 553.1 L470.0 554.6 L471.0 579.7 L472.4 597.8 L473.5 553.1 L474.2 554.6 L475.9 578.9 L477.7 598.8 L478.8 553.2 L479.5 554.7 L480.7 569.9 L482.3 598.4 L483.4 553.1 L484.1 554.6 L485.4 572.5 L487.0 598.0 L488.1 552.0 L488.8 553.5 L489.8 565.6 L491.2 598.6 L492.3 552.7 L493.0 554.2 L494.6 569.8 L496.3 598.9 L497.4 552.4 L498.1 553.9 L499.6 574.9 L501.3 599.3 L502.4 555.0 L503.1 556.5 L504.3 580.0 L505.8 597.5 L506.9 554.8 L507.6 556.3 L509.3 578.7 L511.2 598.8 L512.3 552.2 L513.0 553.7 L514.3 578.2 L515.8 597.7 L516.9 553.1 L517.6 554.6 L518.8 576.4 L520.3 599.8 L521.4 554.4 L522.1 555.9 L523.2 572.4 L524.6 600.4 L525.7 553.5 L526.4 555.0 L528.0 565.6 L529.8 600.1 L530.9 552.2 L531.6 553.7 L533.2 574.1 L534.9 599.7 L536.0 552.1 L536.7 553.6 L537.9 575.3 L539.4 598.1 L540.5 552.3 L541.2 553.8 L542.7 579.8 L544.4 599.0 L545.5 552.8 L546.2 554.3 L547.6 569.5 L549.2 597.7 L550.3 552.5 L551.0 554.0 L552.4 574.7 L554.0 597.9 L555.1 553.5 L555.8 555.0 L557.2 572.4 L558.9 599.5 L560.0 552.1 L560.7 553.6 L562.1 575.9 L563.7 598.4 L564.8 552.4 L565.5 553.9 L566.4 569.5 L567.8 598.4 L568.9 554.1 L569.6 555.6 L570.7 570.3 L572.1 597.6 L573.2 553.6 L573.9 555.1 L575.3 574.4 L577.0 598.8 L578.1 554.6 L578.8 556.1 L580.6 575.8 L582.4 597.8 L583.5 554.3 L584.2 555.8 L585.8 575.8 L587.6 598.3 L588.7 552.2 L589.4 553.7 L591.0 575.0 L592.8 600.0 L593.9 552.7 L594.6 554.2 L595.9 567.4 L597.5 598.6 L598.6 553.0 L599.3 554.5 L600.9 569.1 L602.6 597.8 L600.9 554.2 L601.6 555.7 L602.2 567.7 L603.3 586.4 L604.4 556.0 L605.1 557.5 L605.3 570.1 L606.2 599.8 L607.3 555.5 L608.0 557.0 L608.1 570.4 L609.0 587.5 L610.1 556.4 L610.8 557.9 L611.1 567.6 L612.1 587.1 L613.2 555.7 L613.9 557.2 L614.3 572.6 L615.3 585.4 L616.4 555.9 L617.1 557.4 L618.1 575.1 L619.6 597.4 L620.7 555.6 L621.4 557.1 L621.9 567.7 L623.0 593.2 L624.1 553.1 L624.8 554.6 L625.9 568.6 L627.3 595.5 L628.4 553.5 L629.1 555.0 L630.3 575.7 L631.8 591.8 L632.9 556.7 L633.6 558.2 L634.3 572.0 L635.6 594.7 L636.7 554.5 L637.4 556.0 L637.9 565.8 L639.0 595.4 L640.1 555.9 L640.8 557.4 L641.9 570.9 L643.4 590.1 L644.5 553.9 L645.2 555.4 L645.5 570.9 L646.5 585.5 L647.6 556.0 L648.3 557.5 L648.9 563.8 L650.0 585.7 L651.1 554.6 L651.8 556.1 L652.3 572.6 L653.4 595.5 L654.5 553.5 L655.2 555.0 L655.6 566.9 L656.6 587.1 L657.7 553.5 L658.4 555.0 L659.4 571.5 L660.7 596.1 L661.8 554.7 L662.5 556.2 L662.7 571.6 L663.5 598.1 L664.6 556.1 L665.3 557.6 L665.7 568.5 L666.7 592.9 L667.8 554.9 L668.5 556.4 L669.3 577.1 L670.5 597.4 L671.6 553.1 L672.3 554.6 L673.0 568.3 L674.2 592.3 L675.3 556.9 L676.0 558.4 L676.2 577.3 L677.1 591.1 L678.2 554.7 L678.9 556.2 L679.5 575.8 L680.7 598.5 L681.8 553.7 L682.5 555.2 L683.1 569.2 L684.2 587.6 L685.3 556.9 L686.0 558.4 L686.2 578.4 L687.1 594.3 L688.2 553.2 L688.9 554.7 L689.4 568.5 L690.5 592.2 L691.6 555.0 L692.3 556.5 L693.3 570.8 L694.6 595.1 L695.7 555.9 L696.4 557.4 L697.0 568.5 L698.2 588.2 L699.3 553.1 L700.0 554.6 L700.2 565.8 L701.1 591.4 L700.9 557.5 L701.6 559.0 L702.0 578.5 L703.1 594.1 L704.2 559.0 L704.9 560.5 L704.7 574.1 L705.4 587.5 L706.5 555.8 L707.2 557.3 L708.0 569.8 L709.3 585.0 L710.4 558.4 L711.1 559.9 L711.1 576.0 L711.9 593.3 L713.0 557.7 L713.7 559.2 L713.6 570.0 L714.4 602.9 L715.5 555.2 L716.2 556.7 L716.1 566.6 L716.9 590.0 L718.0 558.3 L718.7 559.8 L718.8 569.1 L719.6 586.1 L720.7 558.0 L721.4 559.5 L721.5 570.3 L722.3 590.9 L723.4 556.5 L724.1 558.0 L724.3 567.7 L725.2 592.3 L726.3 556.9 L727.0 558.4 L726.9 568.0 L727.6 598.3 L728.7 557.7 L729.4 559.2 L729.5 564.7 L730.4 584.8 L731.5 556.2 L732.2 557.7 L733.0 571.9 L734.3 584.1 L735.4 557.6 L736.1 559.1 L736.3 568.5 L737.2 590.5 L738.3 557.6 L739.0 559.1 L740.0 565.0 L741.4 582.1 L742.5 558.7 L743.2 560.2 L743.4 573.0 L744.3 596.4 L745.4 558.3 L746.1 559.8 L746.2 569.5 L747.1 596.4 L748.2 558.7 L748.9 560.2 L748.9 572.0 L749.6 601.8 L750.7 557.2 L751.4 558.7 L751.7 573.4 L752.6 584.7 L753.7 557.7 L754.4 559.2 L754.8 574.2 L755.9 596.0 L757.0 558.0 L757.7 559.5 L757.5 574.1 L758.2 591.2 L759.3 558.3 L760.0 559.8 L760.9 570.0 L762.2 581.4 L763.3 556.3 L764.0 557.8 L764.0 566.0 L764.8 589.3 L765.9 556.5 L766.6 558.0 L766.9 573.8 L767.8 600.0 L768.9 558.7 L769.6 560.2 L770.3 572.6 L771.5 588.5 L772.6 558.9 L773.3 560.4 L773.3 572.3 L774.1 586.1 L775.2 557.3 L775.9 558.8 L776.4 572.8 L777.4 601.2 L778.5 559.0 L779.2 560.5 L779.1 576.2 L779.8 595.0 L780.9 556.9 L781.6 558.4 L782.3 571.5 L783.6 581.5 L784.7 555.2 L785.4 556.7 L785.8 568.3 L786.8 585.8 L787.9 557.9 L788.6 559.4 L788.5 576.7 L789.2 589.7 L790.3 556.6 L791.0 558.1 L791.6 570.1 L792.7 600.5 L793.8 558.3 L794.5 559.8 L795.2 574.9 L796.5 595.3 L797.6 555.0 L798.3 556.5 L798.3 568.0 L799.2 598.0 L800.3 555.3 L801.0 556.8 L801.8 572.5 L803.1 598.5 L804.2 556.1 L804.9 557.6 L805.9 576.7 L807.2 596.1 L808.3 558.7 L809.0 560.2 L809.4 570.1 L810.5 591.7 L811.6 557.4 L812.3 558.9 L813.2 576.6 L814.6 593.0 L815.7 555.8 L816.4 557.3 L816.6 570.3 L817.5 598.4 L818.6 558.3 L819.3 559.8 L820.1 569.0 L821.4 599.2 L822.5 555.0 L823.2 556.5 L823.3 567.8 L824.1 590.0 L825.2 555.7 L825.9 557.2 L826.5 572.6 L827.7 588.6 L828.8 558.9 L829.5 560.4 L829.6 581.6 L830.5 596.8 L831.6 558.6 L832.3 560.1 L833.4 577.3 L834.8 593.7 L835.9 556.4 L836.6 557.9 L837.6 567.5 L838.9 586.2 L840.0 558.6 L840.7 560.1 L840.9 573.3 L841.8 587.3 L842.9 556.7 L843.6 558.2 L843.5 576.2 L844.2 602.2 L845.3 556.6 L846.0 558.1 L846.5 571.3 L847.6 592.8 L848.7 556.6 L849.4 558.1 L849.3 569.6 L850.0 586.8 L851.1 555.8 L851.8 557.3 L851.6 566.8 L852.3 598.4 L853.4 556.0 L854.1 557.5 L854.4 575.0 L855.4 593.3 L856.5 557.2 L857.2 558.7 L858.2 581.3 L859.6 599.8 L860.7 558.1 L861.4 559.6 L862.4 575.4 L863.8 597.9 L864.9 557.6 L865.6 559.1 L865.7 570.2 L866.5 583.1 L867.6 557.8 L868.3 559.3 L868.8 574.5 L869.9 599.3 L871.0 555.3 L871.7 556.8 L871.6 573.9 L872.3 601.7 L873.4 558.2 L874.1 559.7 L874.3 575.4 L875.2 599.0 L876.3 556.3 L877.0 557.8 L877.4 571.3 L878.5 596.1 L876.0 603.0 L876.0 608.3 L886.0 608.3 L886.0 560.0 L886.0 608.3 L889.0 608.3 L889.0 582.0 L889.0 608.3 L891.0 608.3 L891.0 556.0 L891.0 608.3 L893.0 608.3 L893.0 582.0 L893.0 608.3 L895.0 608.3 L895.0 554.0 L895.0 608.3 L897.0 608.3 L897.0 561.5 L898.8 560.0 L902.4 554.3 L904.0 556.0 L906.0 566.0 L907.8 587.6 L908.7 602.0 L912.3 605.2 L925.0 605.2 L927.0 604.0 L929.0 605.2 L931.0 604.0 L933.0 605.2 L936.6 605.2" stroke="#00ff00" stroke-width="1" fill="none" stroke-linejoin="miter"/>
<path d="M255.5 71V160 M255.5 161V251 M255.5 252V342 M255.5 343V433 M255.5 434V524 M255.5 525V615 M255.5 616V706" stroke="#ffff00" stroke-width="1" stroke-dasharray="3 3" fill="none"/>
<path d="M0 160.5H1000 M0 251.5H1000 M0 342.5H1000 M0 433.5H1000 M0 524.5H1000 M0 615.5H1000" stroke="#c8c8c8" stroke-width="1" fill="none"/>
</svg>
<div class="yl" style="top:85px">40</div>
<div class="yl" style="top:114px">20</div>
<div class="yl" style="top:144px">0</div>
<div class="yl" style="top:162px">100</div>
<div class="yl" style="top:201px">0</div>
<div class="yl" style="top:241px">-100</div>
<div class="yl" style="top:251px">20</div>
<div class="yl" style="top:284px">10</div>
<div class="yl" style="top:317px">0</div>
<div class="yl" style="top:343px">20</div>
<div class="yl" style="top:375px">10</div>
<div class="yl" style="top:408px">0</div>
<div class="yl" style="top:435px">100</div>
<div class="yl" style="top:474px">0</div>
<div class="yl" style="top:514px">-100</div>
<div class="yl" style="top:544px">1.0</div>
<div class="yl" style="top:574px">0.5</div>
<div class="yl" style="top:605px">0</div>
<div class="yl" style="top:616px">20</div>
<div class="yl" style="top:648px">10</div>
<div class="yl" style="top:679px">0</div>
<div class="vl" style="top:140px;width:28px;height:14px;overflow:hidden"><span style="display:inline-block;transform:scaleX(1.1);transform-origin:0 0">4.60</span></div>
<div class="vl" style="top:199px;width:28px;height:14px;overflow:hidden"><span style="display:inline-block;transform:scaleX(1.1);transform-origin:0 0">12.5</span></div>
<div class="vl" style="top:261px;width:28px;height:14px;overflow:hidden"><span style="display:inline-block;transform:scaleX(1.1);transform-origin:0 0">18.0</span></div>
<div class="vl" style="top:355px;width:28px;height:14px;overflow:hidden"><span style="display:inline-block;transform:scaleX(1.1);transform-origin:0 0">17.2</span></div>
<div class="vl" style="top:472px;width:28px;height:14px;overflow:hidden"><span style="display:inline-block;transform:scaleX(1.1);transform-origin:0 0">12.5</span></div>
<div class="vl" style="top:601px;width:36px;height:14px;overflow:hidden"><span style="display:inline-block;transform:scaleX(1.1);transform-origin:0 0">0.100</span></div>
<div class="vl" style="top:628px;width:28px;height:14px;overflow:hidden"><span style="display:inline-block;transform:scaleX(1.1);transform-origin:0 0">17.2</span></div>
<div class="a" style="left:969px;top:690px;width:40px;height:14px;background:#e6e6e6;border-top:1px solid #fff;border-left:1px solid #fff;color:#000050;font-size:13px;letter-spacing:-1px;padding-left:1px;line-height:13px;overflow:hidden;will-change:transform">10 s/div</div>
<div id="bot"><div style="position:absolute;left:0;top:0;width:1000px;height:1px;background:#e6e2d4"></div><div style="position:absolute;left:0;top:1px;width:14px;height:8px;background:#fdfcf6;border:1px solid #d8d4c0;border-bottom:none"></div><svg width="14" height="9" style="position:absolute;left:0;top:0"><path d="M7.5 3.5 L5 6 L7.5 8.5" stroke="#b8b4a8" stroke-width="1.5" fill="none"/></svg><div style="position:absolute;left:995px;top:1px;width:5px;height:8px;background:#fdfcf6;border-left:1px solid #d8d4c0"></div></div>
</body></html>
